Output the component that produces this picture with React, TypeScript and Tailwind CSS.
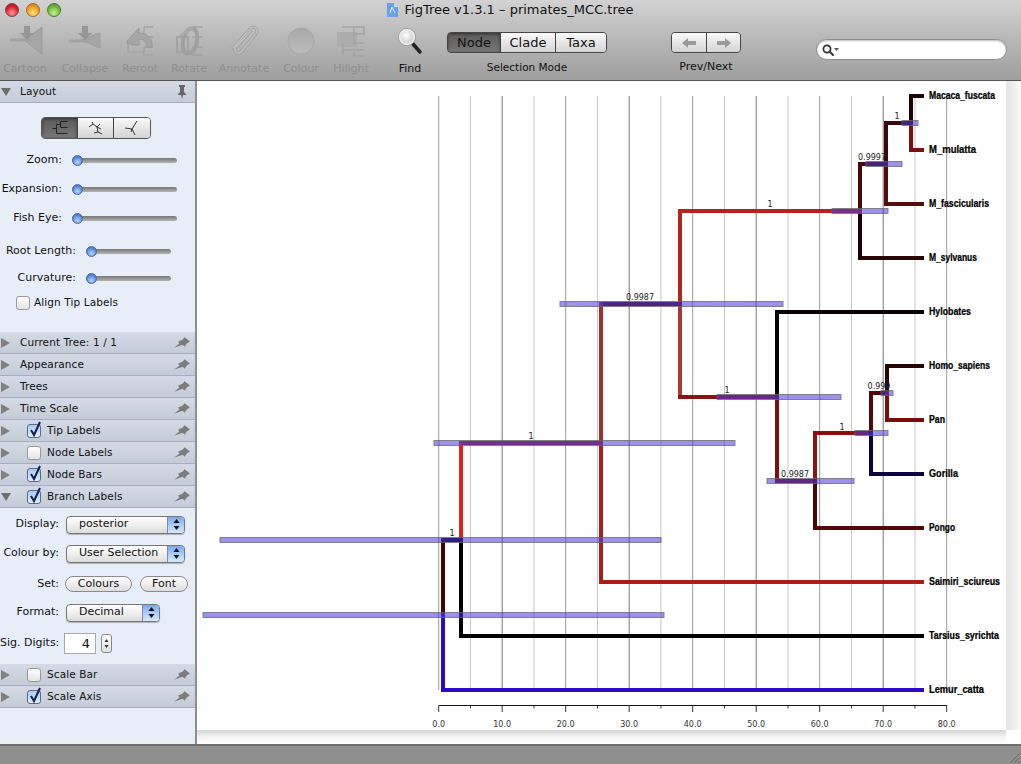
import { ReactNode } from 'react';

type Seg = [number, number, number, number, string];

const branches: Seg[] = [
  // tips
  [911, 96, 922, 96, '#1c0505'],
  [911, 150, 922, 150, '#7a0f0f'],
  [886, 204, 922, 204, '#5a0a0a'],
  [860, 258, 922, 258, '#2a0505'],
  [777, 312, 922, 312, '#050000'],
  [887, 366, 922, 366, '#240606'],
  [887, 420, 922, 420, '#7a0c0c'],
  [871, 474, 922, 474, '#0a0540'],
  [815, 528, 922, 528, '#550606'],
  [601, 582, 922, 582, '#b01c12'],
  [461, 636, 922, 636, '#000000'],
  [443, 690, 922, 690, '#2c08cc'],
  // macaques
  [911, 96, 911, 123, '#1c0505'],
  [911, 123, 911, 150, '#7a0f0f'],
  [886, 123, 911, 123, '#3a0808'],
  [886, 123, 886, 164, '#3a0808'],
  [886, 164, 886, 204, '#5a0a0a'],
  [860, 164, 886, 164, '#4a0808'],
  [860, 164, 860, 211, '#4a0808'],
  [860, 211, 860, 258, '#200404'],
  [680, 211, 860, 211, '#b8221c'],
  [680, 211, 680, 304, '#b8221c'],
  [680, 304, 680, 397, '#a83a32'],
  // apes
  [680, 397, 777, 397, '#8a1414'],
  [777, 312, 777, 397, '#050000'],
  [777, 397, 777, 481, '#7a1010'],
  [777, 481, 815, 481, '#7a1010'],
  [815, 433, 815, 481, '#8a1410'],
  [815, 481, 815, 528, '#480606'],
  [815, 433, 871, 433, '#8a0f0f'],
  [871, 393, 871, 433, '#500808'],
  [871, 433, 871, 474, '#0a0540'],
  [871, 393, 887, 393, '#500808'],
  [887, 366, 887, 393, '#240606'],
  [887, 393, 887, 420, '#7a0c0c'],
  // root side
  [601, 304, 680, 304, '#5a0a18'],
  [601, 304, 601, 443, '#a03028'],
  [601, 443, 601, 582, '#a8201a'],
  [461, 443, 601, 443, '#b01c30'],
  [461, 443, 461, 540, '#e0201c'],
  [461, 540, 461, 636, '#000000'],
  [443, 540, 461, 540, '#0c0010'],
  [443, 540, 443, 615, '#3a0606'],
  [443, 615, 443, 690, '#2c08cc'],
];

const nodeBars: [number, number, number][] = [
  [902, 918, 123],
  [866, 902, 164],
  [832, 888, 211],
  [560, 783, 304],
  [717, 841, 397],
  [881, 893, 393],
  [855, 888, 433],
  [767, 854, 481],
  [434, 735, 443],
  [220, 661, 540],
  [203, 664, 615],
];

const branchLabels: [string, number, number][] = [
  ['1', 897, 119],
  ['0.9997', 872, 160],
  ['1', 770, 207],
  ['0.9987', 640, 300],
  ['1', 727, 393],
  ['0.999', 879, 389],
  ['1', 842, 430],
  ['0.9987', 795, 477],
  ['1', 531, 439],
  ['1', 452, 536],
];

const tips: [string, number, number][] = [
  ['Macaca_fuscata', 99, 66],
  ['M_mulatta', 153, 47],
  ['M_fascicularis', 207, 60],
  ['M_sylvanus', 261, 48],
  ['Hylobates', 315, 42],
  ['Homo_sapiens', 369, 61],
  ['Pan', 423, 16],
  ['Gorilla', 477, 29],
  ['Pongo', 531, 26],
  ['Saimiri_sciureus', 585, 71],
  ['Tarsius_syrichta', 639, 70],
  ['Lemur_catta', 693, 55],
];

const gridTone = ['#9a9a9a', '#c6c6c6', '#777777', '#c6c6c6'];

function TreeCanvas() {
  const ticks = Array.from({ length: 17 }, (_, i) => i);
  const xAt = (i: number) => 438.7 + 31.75 * i;
  return (
    <svg viewBox="197 81 809 649" className="w-[809px] h-[649px] bg-white block">
      {ticks.map((i) => (
        <line key={i} x1={xAt(i)} x2={xAt(i)} y1={96} y2={690} stroke={gridTone[i % 4]} strokeWidth={1} />
      ))}
      {branches.map(([x1, y1, x2, y2, c], i) => (
        <line key={i} x1={x1} y1={y1} x2={x2} y2={y2} stroke={c} strokeWidth={4} strokeLinecap="square" />
      ))}
      {nodeBars.map(([a, b, y], i) => (
        <rect key={i} x={a} y={y - 2.5} width={b - a} height={5} fill="#4a38e0" fillOpacity={0.55} stroke="#666" strokeOpacity={0.75} strokeWidth={1} />
      ))}
      {branchLabels.map(([t, x, y], i) => (
        <text key={i} x={x} y={y} textAnchor="middle" fontSize={8} fill="#222" fontFamily="'DejaVu Sans', sans-serif">
          {t}
        </text>
      ))}
      {tips.map(([t, y, w]) => (
        <text
          key={t}
          transform={`translate(929 ${y}) scale(0.88 1)`}
          fontSize={10}
          fontWeight={700}
          fill="#000"
          stroke="#000"
          strokeWidth={0.25}
          textLength={w / 0.88}
          lengthAdjust="spacingAndGlyphs"
          fontFamily="'Liberation Sans', sans-serif"
        >
          {t}
        </text>
      ))}
      {/* axis */}
      <line x1={438.7} x2={947} y1={705.5} y2={705.5} stroke="#111" strokeWidth={1} />
      {ticks.map((i) => (
        <line key={i} x1={xAt(i)} x2={xAt(i)} y1={705.5} y2={i % 2 === 0 ? 712 : 708.5} stroke="#333" strokeWidth={1} />
      ))}
      {ticks.filter((i) => i % 2 === 0).map((i) => (
        <text key={i} x={xAt(i)} y={727} textAnchor="middle" fontSize={8} fill="#333" fontFamily="'DejaVu Sans', sans-serif">
          {(i * 5).toFixed(1)}
        </text>
      ))}
    </svg>
  );
}

function ToolItem({ label, width, icon, active }: { label: string; width: string; icon: ReactNode; active?: boolean }) {
  return (
    <div className={`${width} flex flex-col items-center`}>
      <div className="h-[37px] mt-[6px] flex items-start justify-center">{icon}</div>
      <span className={`text-[11px] leading-[14px] ${active ? 'text-[#111]' : 'text-[#8e8e8e]'}`}>{label}</span>
    </div>
  );
}

const G = '#a2a2a2';

function CartoonIcon() {
  return (
    <svg width="44" height="34" viewBox="3 25 44 34">
      <path d="M42 27 L24 40 L42 54 Z" fill="#a6a6a6" stroke="#9c9c9c" />
      <path d="M11 40 H30" stroke={G} strokeWidth="3" strokeLinecap="round" />
      <path d="M24 26 H30 V33 H34 L27 40 L20 33 H24 Z" fill="#969696" />
    </svg>
  );
}

function CollapseIcon() {
  return (
    <svg width="44" height="34" viewBox="63 25 44 34">
      <path d="M100 33 L81 40 L100 48 Z" fill="#a6a6a6" stroke="#9c9c9c" />
      <path d="M70 41 H88" stroke={G} strokeWidth="3" strokeLinecap="round" />
      <path d="M82 26 H88 V33 H92 L85 40 L78 33 H82 Z" fill="#969696" />
    </svg>
  );
}

function RerootIcon() {
  return (
    <svg width="44" height="34" viewBox="118 25 44 34" fill="none">
      <path d="M144 27 H153 M144 27 V37 H153 M128 43 V52 H144 M144 47 V55 H153 M144 47 H153" stroke={G} strokeWidth="1.5" />
      <path d="M127 43 V41 L139 28 V33 C148 33 153 39 152 47 H147 C147 42 144 39 139 39 V45 L133 45 Z" fill="#a6a6a6" stroke="#9a9a9a" />
    </svg>
  );
}

function RotateIcon() {
  return (
    <svg width="44" height="34" viewBox="167 25 44 34" fill="none">
      <path d="M192 27 H203 M192 37 H203 M192 47 H203 M192 55 H203" stroke={G} strokeWidth="1.5" />
      <rect x="177" y="37" width="11" height="15" stroke={G} strokeWidth="2" />
      <ellipse cx="190" cy="41" rx="7" ry="13" transform="rotate(12 190 41)" stroke="#a0a0a0" strokeWidth="4" />
      <path d="M180 36 L192 28" stroke="#aaa" strokeWidth="3" />
    </svg>
  );
}

function AnnotateIcon() {
  const clip = 'M251 31 L236 47 C233 51 237 55 241 52 L256 34 C259 29 254 25 250 29 L233 48';
  return (
    <svg width="44" height="34" viewBox="222 25 44 34" fill="none">
      <path d={clip} stroke="#a0a0a0" strokeWidth="3" strokeLinecap="round" />
      <path d={clip} stroke="#c4c4c4" strokeWidth="1.2" strokeLinecap="round" />
    </svg>
  );
}

function ColourIcon() {
  return (
    <svg width="44" height="34" viewBox="279 25 44 34">
      <defs>
        <linearGradient id="colourDisc" x1="0" y1="0" x2="0" y2="1">
          <stop offset="0" stopColor="#a8a8a8" />
          <stop offset="1" stopColor="#bcbcbc" />
        </linearGradient>
      </defs>
      <circle cx="301" cy="41" r="13" fill="url(#colourDisc)" stroke="#a8a8a8" />
    </svg>
  );
}

function HilightIcon() {
  return (
    <svg width="44" height="34" viewBox="329 25 44 34" fill="none">
      <rect x="337" y="32" width="20" height="15" fill="#acacac" />
      <path d="M342 27 H364 V34 H354 M354 27 V43 H364 M343 43 V55 M343 50 H364 M354 50 V56 H364" stroke={G} strokeWidth="1.5" />
    </svg>
  );
}

function FindIcon() {
  return (
    <svg width="44" height="34" viewBox="388 25 44 34">
      <defs>
        <radialGradient id="lens" cx="0.45" cy="0.4" r="0.7">
          <stop offset="0" stopColor="#ffffff" />
          <stop offset="1" stopColor="#c0c0c0" />
        </radialGradient>
      </defs>
      <path d="M413 44 L420 52" stroke="#222" strokeWidth="3.5" strokeLinecap="round" />
      <circle cx="407" cy="37" r="7.5" fill="url(#lens)" stroke="#eeeeee" strokeWidth="2" />
      <circle cx="407" cy="37" r="8.6" fill="none" stroke="#8c8c8c" strokeWidth="0.7" />
    </svg>
  );
}

function Segment({ children, selected, width, last }: { children: ReactNode; selected?: boolean; width: string; last?: boolean }) {
  return (
    <div
      className={`${width} h-full flex items-center justify-center ${last ? '' : 'border-r border-[#444]'} ${
        selected
          ? 'bg-gradient-to-b from-[#5a5a5a] to-[#777777] shadow-[inset_0_1px_3px_rgba(0,0,0,0.5)]'
          : 'bg-gradient-to-b from-[#fafafa] to-[#d4d4d4]'
      }`}
    >
      {children}
    </div>
  );
}

function Toolbar() {
  return (
    <div className="flex h-[61px] items-start">
      <ToolItem label="Cartoon" width="w-[50px]" icon={<CartoonIcon />} />
      <ToolItem label="Collapse" width="w-[70px]" icon={<CollapseIcon />} />
      <ToolItem label="Reroot" width="w-[40px]" icon={<RerootIcon />} />
      <ToolItem label="Rotate" width="w-[58px]" icon={<RotateIcon />} />
      <ToolItem label="Annotate" width="w-[52px]" icon={<AnnotateIcon />} />
      <ToolItem label="Colour" width="w-[62px]" icon={<ColourIcon />} />
      <ToolItem label="Hilight" width="w-[38px]" icon={<HilightIcon />} />
      <ToolItem label="Find" width="w-[80px]" icon={<FindIcon />} active />
      <div className="ml-[-3px] w-[160px] mt-[13px] flex flex-col items-center">
        <div className="w-full h-[21px] flex rounded-[4px] border border-[#444] overflow-hidden text-[13px] text-[#111]">
          <Segment width="w-[53px]" selected>Node</Segment>
          <Segment width="w-[55px]">Clade</Segment>
          <Segment width="flex-1" last>Taxa</Segment>
        </div>
        <span className="mt-[7px] text-[10.5px] leading-[14px] text-[#111]">Selection Mode</span>
      </div>
      <div className="ml-[64px] w-[70px] mt-[13px] flex flex-col items-center">
        <div className="w-full h-[21px] flex rounded-[4px] border border-[#444] overflow-hidden">
          <Segment width="w-[35px]">
            <svg width="16" height="12" viewBox="0 0 16 12"><path d="M1 6 L7 1 V4 H15 V8 H7 V11 Z" fill="#9a9a9a" /></svg>
          </Segment>
          <Segment width="flex-1" last>
            <svg width="16" height="12" viewBox="0 0 16 12"><path d="M15 6 L9 1 V4 H1 V8 H9 V11 Z" fill="#9a9a9a" /></svg>
          </Segment>
        </div>
        <span className="mt-[7px] text-[11px] leading-[14px] text-[#111]">Prev/Next</span>
      </div>
      <div className="ml-[75px] mt-[20px] w-[191px] h-[21px] rounded-full bg-white border border-[#8c8c8c] shadow-[inset_0_1px_2px_rgba(0,0,0,0.25)] flex items-center pl-[5px]">
        <svg width="17" height="12" viewBox="0 0 17 12" fill="none">
          <circle cx="5" cy="5" r="3.6" stroke="#333" strokeWidth="1.7" />
          <path d="M8 8 L11 11" stroke="#333" strokeWidth="2" strokeLinecap="round" />
          <path d="M12 4 H17 L14.500 7 Z" fill="#555" />
        </svg>
      </div>
    </div>
  );
}

function TitleBar() {
  return (
    <div className="flex h-[19px] items-center">
      <div className="w-[62px] flex gap-[7px] pl-[5px] pt-[1px] shrink-0">
        <span className="w-[14px] h-[14px] rounded-full border border-[#8a3a3a] bg-[radial-gradient(circle_at_50%_75%,#ff9a9a,#d81c2c_60%,#a8101c)]" />
        <span className="w-[14px] h-[14px] rounded-full border border-[#9a6a2a] bg-[radial-gradient(circle_at_50%_75%,#ffe27a,#f09a20_60%,#c8641c)]" />
        <span className="w-[14px] h-[14px] rounded-full border border-[#4a7a2a] bg-[radial-gradient(circle_at_50%_75%,#c8f08a,#6cb83a_60%,#3f8a20)]" />
      </div>
      <div className="flex-1 flex items-center justify-center gap-[6px] text-[13px] text-[#111]">
        <svg width="11" height="14" viewBox="0 0 11 14">
          <path d="M0 0 H7 L11 4 V14 H0 Z" fill="#6aa0e4" />
          <path d="M7 0 V4 H11 Z" fill="#cfe0f6" />
          <path d="M3 10 L5 4 L8 10" stroke="#e8f0fc" fill="none" />
        </svg>
        <span>FigTree v1.3.1 – primates_MCC.tree</span>
      </div>
      <div className="w-[62px] shrink-0" />
    </div>
  );
}

function Pin({ upright }: { upright?: boolean }) {
  if (upright) {
    return (
      <svg width="10" height="14" viewBox="0 0 10 14">
        <path d="M2 0 H8 V2 H7 V7 L9 9 V10 H6 L5 14 L4 10 H1 V9 L3 7 V2 H2 Z" fill="#666" />
      </svg>
    );
  }
  return (
    <svg width="17" height="13" viewBox="0 0 16 12">
      <path d="M0 11 L5 7 L4 5 L8 3.500 L10 1 L15 5 L12 7 L10 10 L8 8 Z" fill="#7c7c7c" />
    </svg>
  );
}

function CheckBox({ checked }: { checked?: boolean }) {
  return (
    <span
      className={`relative shrink-0 w-[14px] h-[14px] rounded-[3px] border ${
        checked
          ? 'border-[#5a6a88] bg-gradient-to-b from-[#a8cdf4] to-[#e0f0fe]'
          : 'border-[#999] bg-gradient-to-b from-[#ffffff] to-[#e4e4e4]'
      }`}
    >
      {checked && (
        <svg className="absolute left-[1px] top-[-4px]" width="13" height="17" viewBox="0 0 13 17" fill="none">
          <path d="M2 9 L5 14 L11 1" stroke="#14204a" strokeWidth="2" />
        </svg>
      )}
    </span>
  );
}

function PanelHeader({ title, open, check, pinned }: { title: string; open?: boolean; check?: boolean; pinned?: boolean }) {
  return (
    <div className="h-[22px] flex items-center bg-gradient-to-b from-[#d4dbe6] to-[#c4ccd9] border-b border-[#a6aebd] text-[10.5px] text-[#111] tracking-[0.1px] pr-[4px]">
      <svg className="ml-[1px] shrink-0" width="10" height="10" viewBox="0 0 10 10">
        {open ? <path d="M0 1 H10 L5 9 Z" fill="#6e6e6e" /> : <path d="M0 0 L9 5 L0 10 Z" fill="#808080" />}
      </svg>
      {check === undefined ? (
        <span className="ml-[9px] pt-[1px]">{title}</span>
      ) : (
        <div className="ml-[16px] flex items-center gap-[6px]">
          <CheckBox checked={check} />
          <span className="pt-[1px]">{title}</span>
        </div>
      )}
      <div className="ml-auto flex items-center">{pinned ? <span className="mr-[4px] flex"><Pin upright /></span> : <Pin />}</div>
    </div>
  );
}

function Slider({ label, labelW, trackW }: { label: string; labelW: string; trackW: string }) {
  return (
    <div className="flex items-center h-[14px]">
      <span className={`${labelW} text-right text-[11px] text-[#111] shrink-0 whitespace-nowrap`}>{label}</span>
      <div className={`${trackW} ml-[10px] h-[5px] rounded-full bg-gradient-to-b from-[#777] to-[#b4b4b4] flex items-center`}>
        <span className="w-[11px] h-[11px] rounded-full border border-[#4a68a8] bg-[radial-gradient(circle_at_50%_70%,#bcd8fa,#4a80d8_70%)]" />
      </div>
    </div>
  );
}

function TreeModeButton({ selected, last, path, width }: { selected?: boolean; last?: boolean; path: string; width: string }) {
  return (
    <Segment width={width} selected={selected} last={last}>
      <svg width="20" height="18" viewBox="0 0 20 18" fill="none">
        <path d={path} stroke={selected ? '#222' : '#333'} strokeWidth="1" />
      </svg>
    </Segment>
  );
}

function Popup({ value, width }: { value: string; width: string }) {
  return (
    <div className={`${width} h-[18px] rounded-[4px] border border-[#777] bg-gradient-to-b from-[#ffffff] via-[#efefef] to-[#dcdcdc] flex items-center overflow-hidden shadow-[0_1px_1px_rgba(0,0,0,0.25)]`}>
      <span className="pl-[12px] flex-1 text-[11px] text-[#111]">{value}</span>
      <div className="w-[17px] h-full bg-gradient-to-b from-[#7ba8ee] via-[#a8cdf6] to-[#d6e8fc] border-l border-[#7a8cae] flex items-center justify-center">
        <svg width="7" height="11" viewBox="0 0 7 11"><path d="M3.500 0 L6.500 4 H0.500 Z M3.500 11 L0.500 7 H6.500 Z" fill="#111" /></svg>
      </div>
    </div>
  );
}

function FieldRow({ label, children, height }: { label: string; children: ReactNode; height: string }) {
  return (
    <div className={`flex items-center ${height}`}>
      <span className="w-[59px] text-right text-[11px] text-[#111] shrink-0 whitespace-nowrap">{label}</span>
      <div className="flex items-center">{children}</div>
    </div>
  );
}

function PillButton({ label, width }: { label: string; width: string }) {
  return (
    <div className={`${width} h-[16px] rounded-full border border-[#8a8a8a] bg-gradient-to-b from-[#ffffff] to-[#dedede] flex items-center justify-center text-[11px] text-[#111]`}>
      {label}
    </div>
  );
}

function SidePanel() {
  return (
    <div className="w-[197px] shrink-0 bg-[#e8eef8] border-r-2 border-[#8e8e8e] flex flex-col">
      <PanelHeader title="Layout" open pinned />
      <div className="h-[229px] flex flex-col">
        <div className="mt-[14px] ml-[41px] w-[110px] h-[22px] flex rounded-[4px] border border-[#555] overflow-hidden">
          <TreeModeButton width="w-[36px]" selected path="M2.500 9.500 H6.500 M6.500 5.500 V14.500 H17.500 M6.500 5.500 H10.500 M10.500 2.500 V8.500 M10.500 2.500 H17.500 M10.500 8.500 H17.500" />
          <TreeModeButton width="w-[36px]" path="M3 8 L7 5 L11 8 L14 5 M11 8 L15 10 M11 8 L12 13 L8 14 M12 13 L16 15 M7 5 L6 3" />
          <TreeModeButton width="flex-1" last path="M3 9 L10 10 L15 2 M10 10 L13 16 M10 10 L9 13" />
        </div>
        <div className="mt-[14px] flex flex-col gap-[15px]">
          <Slider label="Zoom:" labelW="w-[62px]" trackW="w-[105px]" />
          <Slider label="Expansion:" labelW="w-[62px]" trackW="w-[105px]" />
          <Slider label="Fish Eye:" labelW="w-[62px]" trackW="w-[105px]" />
        </div>
        <div className="mt-[19px] flex flex-col gap-[13px]">
          <Slider label="Root Length:" labelW="w-[76px]" trackW="w-[85px]" />
          <Slider label="Curvature:" labelW="w-[76px]" trackW="w-[85px]" />
        </div>
        <div className="mt-[10px] ml-[16px] flex items-center gap-[4px] text-[10.5px] text-[#111] tracking-[0.1px]">
          <CheckBox />
          <span>Align Tip Labels</span>
        </div>
      </div>
      <PanelHeader title="Current Tree: 1 / 1" />
      <PanelHeader title="Appearance" />
      <PanelHeader title="Trees" />
      <PanelHeader title="Time Scale" />
      <PanelHeader title="Tip Labels" check />
      <PanelHeader title="Node Labels" check={false} />
      <PanelHeader title="Node Bars" check />
      <PanelHeader title="Branch Labels" open check />
      <div className="h-[156px] pt-[7px] flex flex-col">
        <FieldRow label="Display:" height="h-[19px]">
          <div className="ml-[7px]"><Popup value="posterior" width="w-[119px]" /></div>
        </FieldRow>
        <FieldRow label="Colour by:" height="h-[19px] mt-[10px]">
          <div className="ml-[7px]"><Popup value="User Selection" width="w-[119px]" /></div>
        </FieldRow>
        <FieldRow label="Set:" height="h-[18px] mt-[12px]">
          <div className="ml-[6px] flex gap-[8px]">
            <PillButton label="Colours" width="w-[67px]" />
            <PillButton label="Font" width="w-[48px]" />
          </div>
        </FieldRow>
        <FieldRow label="Format:" height="h-[19px] mt-[10px]">
          <div className="ml-[7px]"><Popup value="Decimal" width="w-[94px]" /></div>
        </FieldRow>
        <FieldRow label="Sig. Digits:" height="h-[22px] mt-[10px]">
          <div className="ml-[5px] flex items-center gap-[5px]">
            <div className="w-[32px] h-[21px] bg-white border border-[#aaa] text-[13px] text-[#111] text-right pr-[5px] leading-[20px]">4</div>
            <div className="w-[11px] h-[19px] rounded-[3px] border border-[#888] bg-gradient-to-b from-[#ffffff] to-[#e0e0e0] flex items-center justify-center">
              <svg width="5" height="11" viewBox="0 0 5 11"><path d="M2.500 1 L4.500 4 H0.500 Z M2.500 10 L0.500 7 H4.500 Z" fill="#333" /></svg>
            </div>
          </div>
        </FieldRow>
      </div>
      <PanelHeader title="Scale Bar" check={false} />
      <PanelHeader title="Scale Axis" check />
    </div>
  );
}

export default function App() {
  return (
    <div className="w-[1021px] h-[764px] flex flex-col overflow-hidden bg-white font-['DejaVu_Sans',sans-serif]">
      <div className="h-[81px] shrink-0 border-b border-[#555] bg-gradient-to-b from-[#d2d2d2] to-[#9e9e9e]">
        <TitleBar />
        <Toolbar />
      </div>
      <div className="flex-1 flex min-h-0">
        <SidePanel />
        <div className="flex-1 flex flex-col min-w-0">
          <div className="flex h-[649px]">
            <TreeCanvas />
            <div className="flex-1 bg-gradient-to-r from-[#e4e4e4] to-[#fafafa]" />
          </div>
          <div className="flex flex-1">
            <div className="w-[809px] bg-gradient-to-b from-[#d6d6d6] via-[#f4f4f4] to-[#ffffff]" />
          </div>
        </div>
      </div>
      <div className="h-[20px] shrink-0 border-t-2 border-[#6e6e6e] bg-[#8f8f8f] flex justify-end items-end">
        <svg width="12" height="12" viewBox="0 0 12 12" stroke="#6a6a6a">
          <path d="M11 1 L1 11 M11 5 L5 11 M11 9 L9 11" />
        </svg>
      </div>
    </div>
  );
}
